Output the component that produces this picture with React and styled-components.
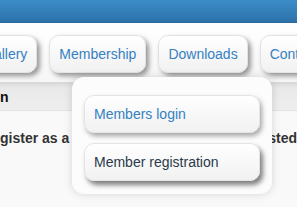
import React from 'react';
import styled, { createGlobalStyle } from 'styled-components';

const GlobalStyle = createGlobalStyle`
  html, body {
    margin: 0;
    padding: 0;
    background: #f9f9f9;
    font-family: "Liberation Sans", Arial, sans-serif;
    overflow: hidden;
  }
`;

const Page = styled.div`
  position: relative;
  width: 297px;
  height: 207px;
  overflow: hidden;
  background: #f9f9f9;
`;

const TopBar = styled.div`
  height: 22px;
  background: linear-gradient(#3c8cc8, #2d72aa);
  border-bottom: 1px solid #28689d;
`;

const NavArea = styled.nav`
  height: 59px;
  background: linear-gradient(#ffffff, #f6f6f6);
  overflow: hidden;
`;

// the strip is scrolled sideways, "Gallery" is partly out of view
const NavStrip = styled.div`
  display: flex;
  gap: 12px;
  margin-left: -27px;
  padding-top: 12px;
`;

const NavButton = styled.a`
  flex: none;
  display: flex;
  align-items: center;
  height: 36px;
  padding: 0 9px;
  border: 1px solid #e2e2e2;
  border-radius: 10px;
  background: linear-gradient(#ffffff, #f1f1f1);
  box-shadow: 3px 3px 5px rgba(0, 0, 0, 0.4);
  color: #3581c2;
  font-size: 14px;
  text-decoration: none;
`;

const HeaderBar = styled.div`
  height: 29px;
  display: flex;
  align-items: center;
  padding-top: 2px;
  box-sizing: border-box;
  background: linear-gradient(#d6d6d6 0px, #e9e9e9 6px, #eeeeee 100%);
  border-bottom: 1px solid #e2e2e2;
  font-size: 14px;
  font-weight: bold;
  color: #111;
`;

const Content = styled.div`
  display: flex;
  justify-content: space-between;
  padding: 19px 0 0 0;
  font-size: 14px;
  font-weight: bold;
  color: #333;
  white-space: nowrap;
`;

const Dropdown = styled.div`
  position: absolute;
  left: 72px;
  top: 77px;
  width: 200px;
  box-sizing: border-box;
  display: flex;
  flex-direction: column;
  gap: 10px;
  padding: 18px 12px 13px;
  background: #fcfcfc;
  border-radius: 12px;
  box-shadow: 0 0 8px rgba(0, 0, 0, 0.15);
`;

const MenuItem = styled.a`
  display: flex;
  align-items: center;
  height: 36px;
  padding: 0 9px;
  border: 1px solid #e4e4e4;
  border-radius: 10px;
  background: linear-gradient(#ffffff, #f1f1f1);
  box-shadow: ${p => (p.$hover ? '3px 4px 5px rgba(0,0,0,0.5)' : '2px 3px 5px rgba(0,0,0,0.35)')};
  color: ${p => (p.$hover ? '#2a3a4a' : '#3581c2')};
  font-size: 14px;
  text-decoration: none;
`;

export default function App() {
  return (
    <Page>
      <GlobalStyle />
      <TopBar />
      <NavArea>
        <NavStrip>
          <NavButton>Gallery</NavButton>
          <NavButton>Membership</NavButton>
          <NavButton>Downloads</NavButton>
          <NavButton>Contact</NavButton>
        </NavStrip>
      </NavArea>
      <HeaderBar>n</HeaderBar>
      <Content>
        <span>gister as a</span>
        <span>sted</span>
      </Content>
      <Dropdown>
        <MenuItem>Members login</MenuItem>
        <MenuItem $hover>Member registration</MenuItem>
      </Dropdown>
    </Page>
  );
}
